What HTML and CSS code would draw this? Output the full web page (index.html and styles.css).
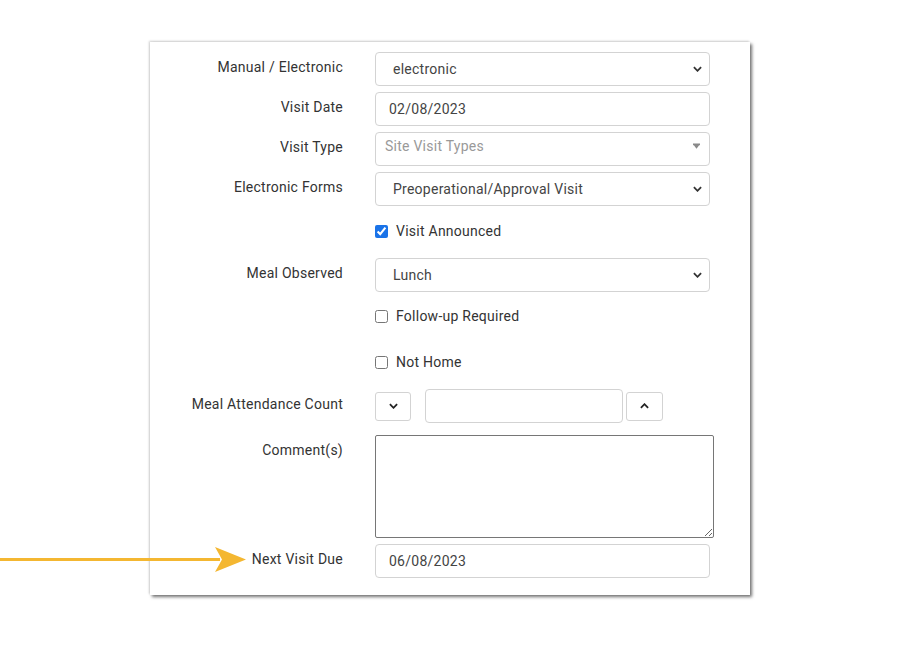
FILE: index.html
```html
<!DOCTYPE html>
<html lang="en">
<head>
    <meta charset="UTF-8">
    <meta name="viewport" content="width=device-width, initial-scale=1.0">
    <title>Site Visit</title>
    <link rel="stylesheet" href="styles.css">
</head>
<body>
    <div class="page">
        <form class="panel">
            <div class="row">
                <label class="label">Manual / Electronic</label>
                <div class="select-wrap">
                    <select class="field select"><option>electronic</option></select>
                    <svg class="chev" viewBox="0 0 10 6"><path d="M1 1l4 4 4-4"/></svg>
                </div>
            </div>
            <div class="row">
                <label class="label">Visit Date</label>
                <input class="field input" type="text" value="02/08/2023">
            </div>
            <div class="row">
                <label class="label">Visit Type</label>
                <div class="select-wrap">
                    <div class="field multi">Site Visit Types</div>
                    <svg class="tri" viewBox="0 0 8 6"><path d="M0 0h8v2H0zM1 2h6L4 6z"/></svg>
                </div>
            </div>
            <div class="row">
                <label class="label">Electronic Forms</label>
                <div class="select-wrap">
                    <select class="field select"><option>Preoperational/Approval Visit</option></select>
                    <svg class="chev" viewBox="0 0 10 6"><path d="M1 1l4 4 4-4"/></svg>
                </div>
            </div>
            <div class="row check-row announced">
                <span></span>
                <label class="check"><input type="checkbox" checked> Visit Announced</label>
            </div>
            <div class="row">
                <label class="label">Meal Observed</label>
                <div class="select-wrap">
                    <select class="field select"><option>Lunch</option></select>
                    <svg class="chev" viewBox="0 0 10 6"><path d="M1 1l4 4 4-4"/></svg>
                </div>
            </div>
            <div class="row check-row followup">
                <span></span>
                <label class="check"><input type="checkbox"> Follow-up Required</label>
            </div>
            <div class="row check-row nothome">
                <span></span>
                <label class="check"><input type="checkbox"> Not Home</label>
            </div>
            <div class="row">
                <label class="label">Meal Attendance Count</label>
                <div class="counter">
                    <button type="button" class="step down"><svg viewBox="0 0 10 6"><path d="M1 1l4 4 4-4"/></svg></button>
                    <input class="field count" type="text">
                    <button type="button" class="step up"><svg viewBox="0 0 10 6"><path d="M1 5l4-4 4 4"/></svg></button>
                </div>
            </div>
            <div class="row comment-row">
                <label class="label">Comment(s)</label>
                <textarea class="comments"></textarea>
            </div>
            <div class="row">
                <label class="label">Next Visit Due</label>
                <input class="field input" type="text" value="06/08/2023">
            </div>
        </form>

        <!-- annotation arrow -->
        <svg class="arrow" viewBox="0 0 250 30">
            <rect x="0" y="13" width="220" height="3" fill="#f4b731"/>
            <path d="M215 2L246 14.5L215 27L222 14.5z" fill="#f4b731"/>
        </svg>
    </div>
</body>
</html>
```

FILE: styles.css
```css
body {
    margin: 0;
    background: white;
    font-family: Roboto, "Liberation Sans", Arial, sans-serif;
    font-size: 14px;
    letter-spacing: 0.25px;
    color: #333;
}
.page {
    position: relative;
    width: 900px;
    height: 651px;
    padding-top: 42px;
    box-sizing: border-box;
}
.panel {
    width: 600px;
    margin-left: 150px;
    box-sizing: border-box;
    padding: 10px 0 17px 0;
    background: white;
    box-shadow: 2px 2px 3px rgba(0, 0, 0, 0.55), -1px -1px 2px rgba(0, 0, 0, 0.18);
    display: flex;
    flex-direction: column;
    gap: 6px;
}
.row {
    display: grid;
    grid-template-columns: 193px 335px;
    column-gap: 32px;
    align-items: start;
}
.label {
    text-align: right;
    padding-top: 7px;
    line-height: 16px;
    color: #333;
}
.field {
    box-sizing: border-box;
    width: 100%;
    height: 34px;
    border: 1px solid #d3d3d3;
    border-radius: 4px;
    background: white;
    font-family: inherit;
    font-size: 14px;
    letter-spacing: 0.25px;
    color: #444;
    outline: none;
}
.select-wrap {
    position: relative;
}
.select {
    appearance: none;
    -webkit-appearance: none;
    padding: 0 17px;
}
.input {
    padding: 0 13px;
}
.multi {
    padding: 4px 9px 0;
    line-height: 18px;
    color: #999;
}
.chev {
    position: absolute;
    right: 8px;
    top: 14px;
    width: 9px;
    height: 6px;
    fill: none;
    stroke: #333;
    stroke-width: 2;
}
.tri {
    position: absolute;
    right: 10px;
    top: 11px;
    width: 7px;
    height: 6px;
    fill: #8a8a8a;
}
.check-row .check {
    display: flex;
    align-items: center;
    gap: 8px;
    line-height: 20px;
    color: #333;
}
.check input {
    margin: 0;
    width: 13px;
    height: 13px;
    accent-color: #1a73e8;
}
.announced {
    padding-top: 9px;
    height: 40px;
    box-sizing: border-box;
}
.followup {
    padding-top: 8px;
    height: 42px;
    box-sizing: border-box;
}
.nothome {
    padding-top: 6px;
    height: 37px;
    box-sizing: border-box;
}
.counter {
    display: flex;
    align-items: center;
    height: 34px;
}
.step {
    box-sizing: border-box;
    width: 36px;
    height: 29px;
    padding: 0;
    border: 1px solid #d3d3d3;
    border-radius: 3px;
    background: white;
    display: flex;
    align-items: center;
    justify-content: center;
}
.step svg {
    width: 9px;
    height: 6px;
    fill: none;
    stroke: #222;
    stroke-width: 2;
}
.count {
    width: 198px;
    margin: 0 3px 0 14px;
    padding: 0 10px;
}
.up {
    width: 37px;
}
.comment-row {
    margin-top: 6px;
}
.comments {
    box-sizing: border-box;
    width: 339px;
    height: 103px;
    border: 1px solid #767676;
    border-radius: 2px;
    font-family: inherit;
    font-size: 14px;
    resize: vertical;
    outline: none;
}
.arrow {
    position: absolute;
    left: 0;
    top: 545px;
    width: 250px;
    height: 30px;
}
```
